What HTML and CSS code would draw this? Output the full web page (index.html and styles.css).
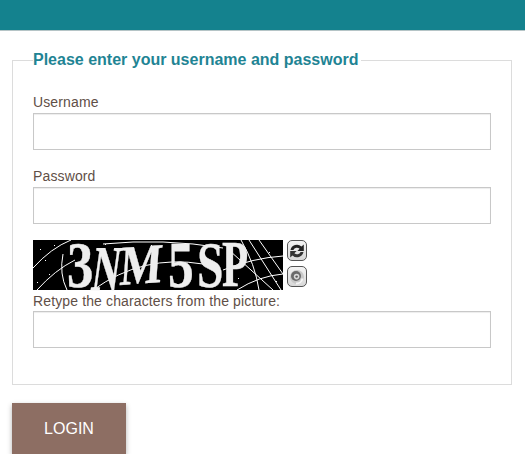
FILE: index.html
```html
<!DOCTYPE html>
<html lang="en">
<head>
    <meta charset="UTF-8">
    <meta name="viewport" content="width=device-width, initial-scale=1.0">
    <title>Login</title>
    <link rel="stylesheet" href="styles.css">
</head>
<body>
    <div class="topbar"></div>

    <form class="login-form">
        <fieldset class="login-box">
            <legend>Please enter your username and password</legend>

            <label for="username">Username</label>
            <input type="text" id="username" name="username">

            <label for="password">Password</label>
            <input type="password" id="password" name="password">

            <!-- Captcha picture and its two small buttons -->
            <div class="captcha-row">
                <svg class="captcha-img" width="250" height="50" viewBox="0 0 250 50">
                    <rect width="250" height="50" fill="#000"/>
                    <g fill="none" stroke="#fff" stroke-width="1">
                        <path d="M0 28 Q18 8 38 0"/>
                        <path d="M4 50 Q22 30 42 20"/>
                        <path d="M30 14 Q26 34 34 50"/>
                        <path d="M60 50 Q110 14 170 24"/>
                        <path d="M70 4 Q130 -2 190 8"/>
                        <path d="M216 0 L248 50"/>
                        <path d="M226 0 L250 34"/>
                        <path d="M208 0 Q222 24 226 50"/>
                        <path d="M190 30 Q220 18 250 16"/>
                        <path d="M204 50 Q226 36 250 34"/>
                        <path d="M196 10 L240 50"/>
                    </g>
                    <g fill="#fff">
                        <rect x="7" y="9" width="1" height="1"/>
                        <rect x="16" y="34" width="1" height="1"/>
                        <rect x="21" y="5" width="1" height="1"/>
                        <rect x="12" y="20" width="1" height="1"/>
                        <rect x="4" y="42" width="1" height="1"/>
                        <rect x="46" y="6" width="1" height="1"/>
                        <rect x="72" y="4" width="1" height="1"/>
                        <rect x="150" y="44" width="1" height="1"/>
                        <rect x="178" y="45" width="1" height="1"/>
                        <rect x="205" y="38" width="1" height="1"/>
                        <rect x="236" y="12" width="1" height="1"/>
                        <rect x="243" y="41" width="1" height="1"/>
                        <rect x="118" y="5" width="1" height="1"/>
                    </g>
                    <g class="captcha-text" fill="#eee" stroke="#eee">
                        <text transform="translate(34 47) scale(0.8 1)" font-size="66">3</text>
                        <text transform="translate(57 50) skewX(-8) scale(0.6 1)" font-size="64">N</text>
                        <text transform="translate(86 45) rotate(-4) skewX(-8) scale(0.8 1)" font-size="56">M</text>
                        <text transform="translate(135 47) scale(0.78 1)" font-size="66">5</text>
                        <text transform="translate(164 47) scale(0.72 1)" font-size="66">S</text>
                        <text transform="translate(189 46) scale(0.65 1)" font-size="66">P</text>
                    </g>
                </svg>
                <div class="captcha-buttons">
                    <button type="button" class="captcha-btn" title="Refresh">
                        <svg width="16" height="16" viewBox="0 0 16 16">
                            <path d="M1.5 7 A6.5 6.5 0 0 1 12.5 3.6 L14.8 1.5 L14.8 8 L8.4 8 L10.6 5.8 A3.8 3.8 0 0 0 4.4 7 Z" fill="#222"/>
                            <path d="M14.5 9 A6.5 6.5 0 0 1 3.5 12.4 L1.2 14.5 L1.2 8 L7.6 8 L5.4 10.2 A3.8 3.8 0 0 0 11.6 9 Z" fill="#333"/>
                        </svg>
                    </button>
                    <button type="button" class="captcha-btn" title="Listen">
                        <svg width="16" height="16" viewBox="0 0 16 16">
                            <circle cx="8" cy="8" r="7" fill="#c8c8c8"/>
                            <path d="M13.5 9.5 A6 6 0 0 1 7 14.5" fill="none" stroke="#f4f4f4" stroke-width="2"/>
                            <circle cx="7" cy="7" r="5" fill="#6a6a6a"/>
                            <circle cx="7.6" cy="7.6" r="2.8" fill="#d8d8d8"/>
                            <circle cx="7.6" cy="7.6" r="1.2" fill="#5a5a5a"/>
                        </svg>
                    </button>
                </div>
            </div>

            <label for="captcha" class="captcha-label">Retype the characters from the picture:</label>
            <input type="text" id="captcha" name="captcha">
        </fieldset>

        <button type="submit" class="login-btn">LOGIN</button>
    </form>
</body>
</html>
```

FILE: styles.css
```css
body {
    margin: 0;
    font-family: "Liberation Sans", Arial, sans-serif;
    font-size: 14px;
    color: #5f4f47;
    background: #fff;
}
.topbar {
    height: 31px;
    background: #14828e;
    border-bottom: 1px solid #b5c4c6;
    box-sizing: border-box;
}
.login-form {
    padding: 0 13px 0 12px;
}
.login-box {
    margin: 20px 0 0;
    padding: 25px 20px 36px;
    height: 334px;
    box-sizing: border-box;
    border: 1px solid #dcdcdc;
}
.login-box legend {
    padding: 0 3px 0 0;
    font-size: 16px;
    font-weight: bold;
    line-height: 18px;
    color: #1f8494;
}
label {
    display: block;
    line-height: 16px;
    margin-bottom: 3px;
    letter-spacing: 0.13px;
}
input {
    display: block;
    width: 100%;
    height: 37px;
    box-sizing: border-box;
    margin: 0 0 18px;
    border: 1px solid #c8c8c8;
    box-shadow: inset 0 1px 1px rgba(0, 0, 0, 0.075);
    background: #fff;
    outline: none;
}
.captcha-row {
    display: flex;
    gap: 4px;
    margin-top: -2px;
    height: 50px;
}
.captcha-img {
    display: block;
    overflow: visible;
}
.captcha-text {
    font-family: "Liberation Serif", serif;
    font-weight: bold;
    stroke-width: 0.4;
}
.captcha-buttons {
    display: flex;
    flex-direction: column;
    gap: 5px;
}
.captcha-btn {
    width: 20px;
    height: 21px;
    padding: 1px;
    display: flex;
    align-items: center;
    justify-content: center;
    box-sizing: border-box;
    background: linear-gradient(#f4f4f4, #d8d8d8);
    border: 1px solid #555;
    border-radius: 5px;
}
.captcha-label {
    margin: 3px 0 2px;
}
.login-btn {
    display: block;
    width: 114px;
    height: 51px;
    margin-top: 18px;
    border: none;
    background: #8d6e63;
    color: #fff;
    font-family: "Liberation Sans", Arial, sans-serif;
    font-size: 16px;
    box-shadow: 0 2px 5px rgba(0, 0, 0, 0.3);
}
```
